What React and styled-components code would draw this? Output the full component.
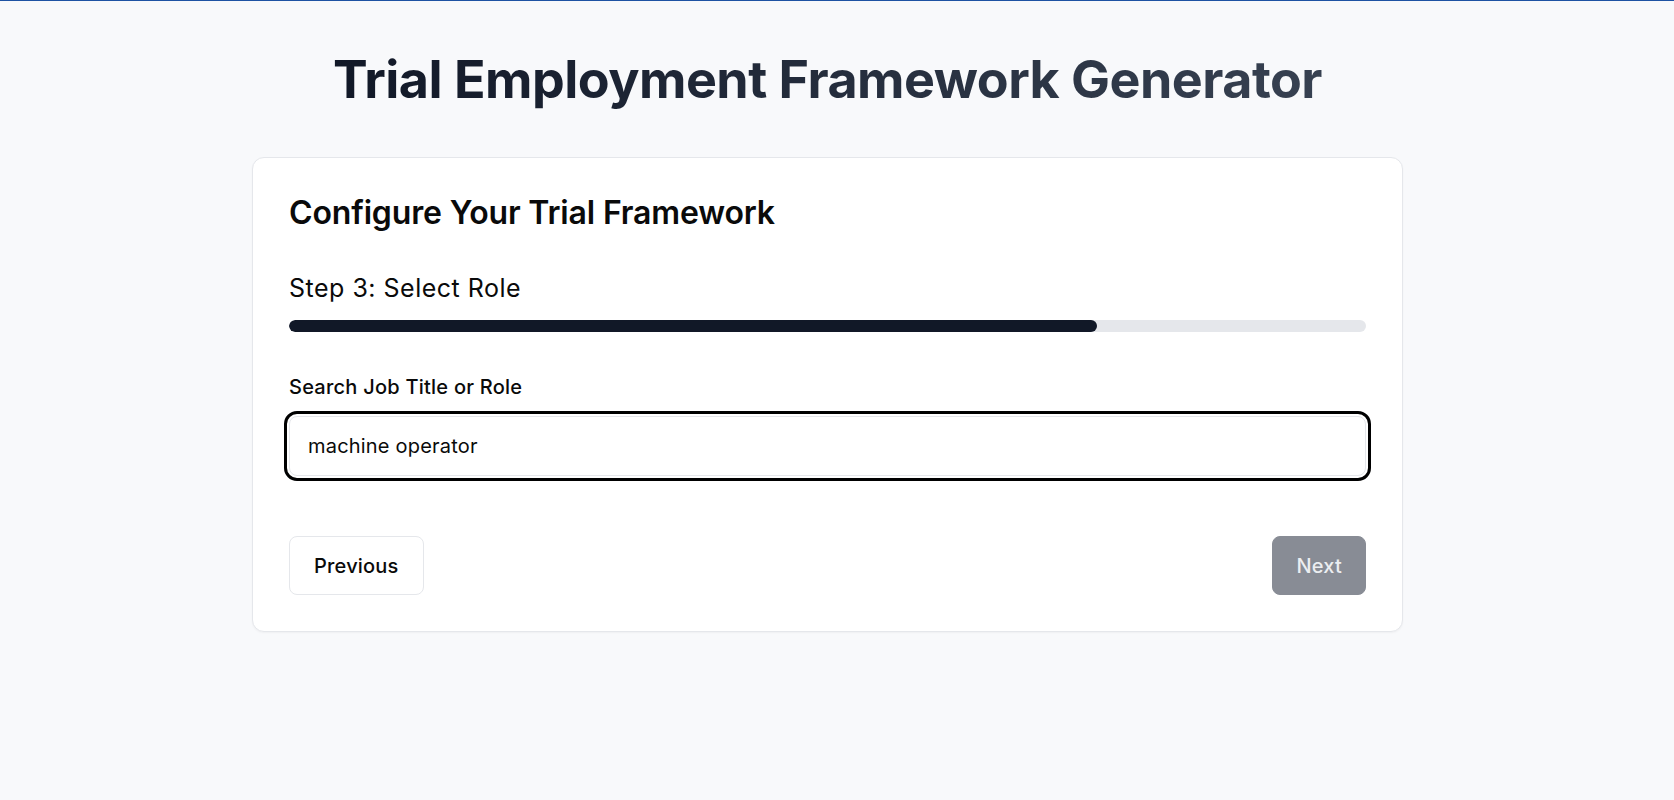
import React from "react";
import styled, { createGlobalStyle } from "styled-components";

const Global = createGlobalStyle`
  html, body { margin: 0; padding: 0; }
  body {
    background: #f8f9fb;
    font-family: Inter, "Noto Sans", "Liberation Sans", sans-serif;
    color: #0a0a0a;
    border-top: 1px solid #1e52a3;
    min-height: 799px;
  }
  * { box-sizing: border-box; }
`;

const Page = styled.div`
  padding: 48px 19px 0 0;
  display: flex;
  flex-direction: column;
  align-items: center;
`;

const Title = styled.h1`
  margin: 0;
  font-size: 52px;
  line-height: 1.2;
  font-weight: 700;
  letter-spacing: -0.01em;
  background: linear-gradient(90deg, #111827, #374151);
  -webkit-background-clip: text;
  background-clip: text;
  color: transparent;
`;

const Card = styled.section`
  margin-top: 46px;
  width: 1151px;
  background: #ffffff;
  border: 1px solid #e5e7eb;
  border-radius: 12px;
  box-shadow: 0 1px 2px rgba(0, 0, 0, 0.04);
  padding: 36px;
  display: flex;
  flex-direction: column;
`;

const CardTitle = styled.h2`
  margin: 0;
  font-size: 32px;
  line-height: 38px;
  font-weight: 600;
  letter-spacing: -0.005em;
  color: #0a0a0a;
`;

const StepLabel = styled.h3`
  margin: 40px 0 0;
  font-size: 25px;
  line-height: 32px;
  font-weight: 400;
  letter-spacing: 0.02em;
  color: #0a0a0a;
`;

const Track = styled.div`
  margin-top: 16px;
  height: 12px;
  border-radius: 999px;
  background: #e5e7eb;
  overflow: hidden;
`;

const Fill = styled.div`
  height: 100%;
  background: #111827;
  border-radius: 999px;
`;

const Field = styled.div`
  margin-top: 41px;
  display: flex;
  flex-direction: column;
  gap: 15px;
`;

const Label = styled.label`
  font-size: 20px;
  line-height: 28px;
  font-weight: 500;
  letter-spacing: 0.012em;
  color: #0a0a0a;
`;

const Input = styled.input`
  height: 60px;
  width: 100%;
  border: 1px solid #e5e7eb;
  border-radius: 8px;
  background: #fff;
  padding: 0 18px;
  font-family: inherit;
  font-size: 20px;
  letter-spacing: 0.01em;
  color: #0a0a0a;
  outline: 3px solid #000;
  outline-offset: 2px;
`;

const Actions = styled.div`
  margin-top: 60px;
  display: flex;
  justify-content: space-between;
  align-items: center;
`;

const Button = styled.button`
  height: 59px;
  padding: 0 ${(p) => (p.$primary ? "23px" : "24px")};
  border-radius: 8px;
  font-family: inherit;
  font-size: 20px;
  font-weight: 500;
  letter-spacing: 0.01em;
  cursor: pointer;
  border: 1px solid ${(p) => (p.$primary ? "#888c95" : "#e5e7eb")};
  background: ${(p) => (p.$primary ? "#888c95" : "#ffffff")};
  color: ${(p) => (p.$primary ? "#eceef1" : "#0a0a0a")};
`;

export default function App() {
  const progress = 75;
  return (
    <>
      <Global />
      <Page>
        <Title>Trial Employment Framework Generator</Title>
        <Card>
          <CardTitle>Configure Your Trial Framework</CardTitle>
          <StepLabel>Step 3: Select Role</StepLabel>
          <Track>
            <Fill style={{ width: `${progress}%` }} />
          </Track>
          <Field>
            <Label htmlFor="role">Search Job Title or Role</Label>
            <Input id="role" defaultValue="machine operator" />
          </Field>
          <Actions>
            <Button>Previous</Button>
            <Button $primary disabled>Next</Button>
          </Actions>
        </Card>
      </Page>
    </>
  );
}
